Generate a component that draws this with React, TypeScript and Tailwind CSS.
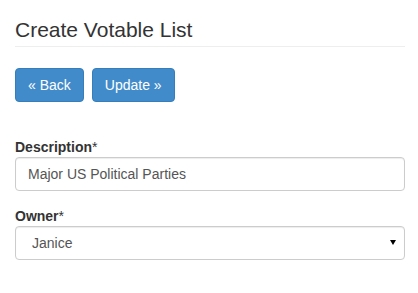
import React from "react";

export default function App() {
  return (
    <div className="min-h-screen bg-white pl-[15px] pr-[13px] pt-[18px] font-['Liberation_Sans',Arial,sans-serif] text-[#333]">
      <h3 className="text-[21px] leading-6 pb-1 border-b border-[#eee]">Create Votable List</h3>

      <div className="mt-[21px] flex gap-2">
        <button className="h-[34px] px-3 rounded border border-[#357ebd] bg-[#428bca] text-sm leading-5 text-white">
          « Back
        </button>
        <button className="h-[34px] px-3 rounded border border-[#357ebd] bg-[#428bca] text-sm leading-5 text-white">
          Update »
        </button>
      </div>

      <form className="mt-[37px]">
        <div className="mb-[17px]">
          <label className="block mb-[2px] text-sm leading-4 font-bold">
            Description<span className="font-normal">*</span>
          </label>
          <input
            className="block w-full h-[34px] px-3 rounded border border-[#ccc] text-sm text-[#555] shadow-[inset_0_1px_1px_rgba(0,0,0,0.075)] outline-none"
            defaultValue="Major US Political Parties"
          />
        </div>
        <div>
          <label className="block mb-[2px] text-sm leading-4 font-bold">
            Owner<span className="font-normal">*</span>
          </label>
          <div className="relative">
            <select
              className="block w-full h-[34px] pl-4 pr-8 rounded border border-[#ccc] bg-white text-sm text-[#555] shadow-[inset_0_1px_1px_rgba(0,0,0,0.075)] appearance-none outline-none"
              defaultValue="Janice"
            >
              <option>Janice</option>
            </select>
            <svg
              className="absolute right-[9px] top-[14px] w-[6px] h-[5px] pointer-events-none"
              viewBox="0 0 6 5"
            >
              <path d="M0 0h6L3 5z" fill="#000" />
            </svg>
          </div>
        </div>
      </form>
    </div>
  );
}
